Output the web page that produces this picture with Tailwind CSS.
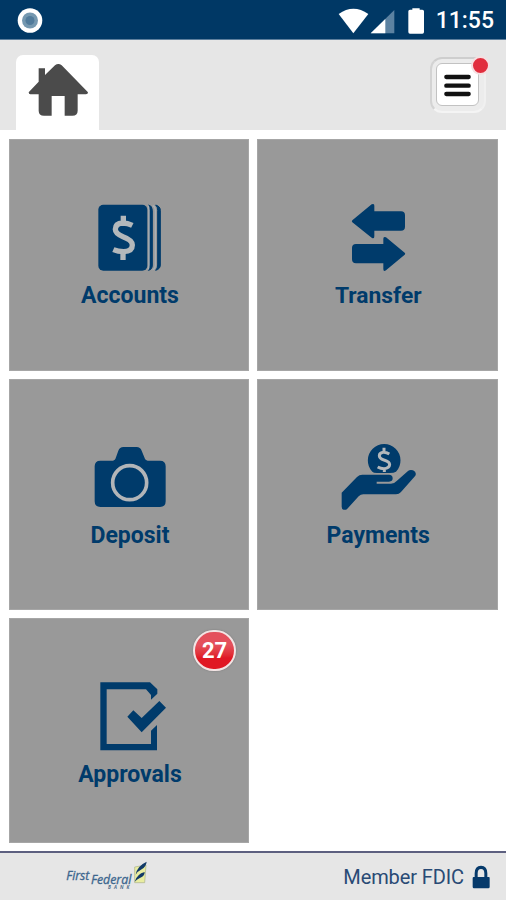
<!DOCTYPE html>
<html lang="en">
<head>
    <meta charset="UTF-8">
    <meta name="viewport" content="width=device-width, initial-scale=1.0">
    <title>First Federal Bank</title>
    <script src="https://cdn.jsdelivr.net/npm/@tailwindcss/browser@4"></script>
</head>
<body class="bg-white font-['Roboto',sans-serif] text-[#003b6b]">

    <div class="flex flex-col w-[506px] h-[900px] overflow-hidden">

        <!-- Status bar -->
        <div class="flex h-10 shrink-0 items-center justify-between bg-[#003865] border-b border-[#5d7f9d] pl-[17px] pr-3 text-white">
            <svg class="size-[26px]" viewBox="0 0 26 26">
                <circle cx="13" cy="13.5" r="12.3" fill="#fff"/>
                <circle cx="13" cy="13.5" r="8" fill="#7598b0"/>
                <circle cx="13" cy="13.5" r="4.5" fill="#517b9b"/>
            </svg>
            <div class="flex items-center">
                <svg class="w-[90px] h-[30px]" viewBox="0 0 270 90">
                    <path d="M5 27Q49 -4 94 27L49 85Z" fill="#fff"/>
                    <path d="M172 15V85H101Z" fill="#5c82a1"/>
                    <path d="M145 42V85H101Z" fill="#fff"/>
                    <path d="M214 19Q214 14 219 14H226V10H248V14H256Q261 14 261 19V81Q261 86 256 86H219Q214 86 214 81Z" fill="#fff"/>
                </svg>
                <span class="ml-[9px] text-[23px] leading-6 font-medium pt-[3px]">11:55</span>
            </div>
        </div>

        <!-- Header -->
        <div class="flex h-[90px] shrink-0 items-start justify-between bg-[#e6e6e6] pl-4 pr-[15px]">
            <div class="mt-[15px] h-[75px] w-[83px] rounded-t-[7px] bg-white">
                <svg class="w-[83px] h-[75px]" viewBox="48 165 249 225">
                    <path d="M86 277L116 245V205H135V225L165 196Q175 188 185 196L264 277Q264 283 258 283H233V332Q233 347 217 347H194V288H155V347H132Q116 347 116 332V283H91Q86 283 86 277Z" fill="#4b4b4b"/>
                </svg>
            </div>
            <div class="relative mt-[17px] mr-[5px] size-14 rounded-xl border-2 border-t-[#cecece] border-l-[#d3d3d3] border-r-[#f0f0f0] border-b-[#f4f4f4] bg-[#ececec] p-1">
                <div class="flex h-[43px] w-[43px] flex-col items-center justify-center gap-1 rounded-md border border-[#c2c2c2] bg-white">
                    <svg class="h-6 w-[27px]" viewBox="0 0 81 72">
                        <path d="M7 12H74M7 38H74M7 63H74" stroke="#111" stroke-width="13" stroke-linecap="round"/>
                    </svg>
                </div>
                <span class="absolute -top-[3px] -right-[6px] size-[19px] rounded-full border-2 border-[#f6dfe1] bg-[#e12d3d]"></span>
            </div>
        </div>

        <!-- Tiles -->
        <div class="grid flex-1 grid-cols-[240px_240.5px] grid-rows-[231.5px_231.5px_225px] gap-2 bg-white pl-[9px] pt-[9px]">

            <div class="flex flex-col items-center border border-[#a6a6a6] bg-[#999] pt-[50px]">
                <svg class="w-[120px] h-[88px]" viewBox="-2 0 360 264">
                    <rect x="86" y="44" width="147" height="198" rx="15" fill="#003b6b"/>
                    <path d="M236 45Q248 47 248 61V225Q248 239 236 241Q240 236 240 225V61Q240 50 236 45Z" fill="#003b6b" stroke="#003b6b" stroke-width="3"/>
                    <path d="M258 45Q272 49 272 61V225Q272 237 258 241Q264 235 264 225V61Q264 50 258 45Z" fill="#003b6b" stroke="#003b6b" stroke-width="3"/>
                    <path d="M249 47Q257 50 257 61V225Q257 236 249 239" fill="none" stroke="#a9b0b6" stroke-width="4"/>
                    <path d="M235 46Q238 50 238 61V225Q238 235 235 239" fill="none" stroke="#a9b0b6" stroke-width="4"/>
                    <path d="M188 106Q174 99 159 99Q137 100 137 118Q137 131 160 140Q188 150 188 165Q188 184 162 185Q145 185 131 179M161 77V99M160 187V210" fill="none" stroke="#b4b8bb" stroke-width="16"/>
                </svg>
                <span class="ml-[2px] mt-1.5 text-[23px] leading-6 font-bold">Accounts</span>
            </div>

            <div class="flex flex-col items-center border border-[#a6a6a6] bg-[#999] pt-[50px]">
                <svg class="ml-[2px] w-[120px] h-[88px]" viewBox="-6 0 360 264">
                    <path d="M97 91L155 43Q163 39 163 47V64H243Q255 64 255 76V110Q255 122 243 122H163V139Q163 148 155 143L97 97Q94 94 97 91Z" fill="#003b6b"/>
                    <path d="M254 188L198 142Q190 138 190 146V162H108Q96 162 96 174V208Q96 220 108 220H190V237Q190 246 198 241L254 194Q257 191 254 188Z" fill="#003b6b"/>
                </svg>
                <span class="ml-[2px] mt-1.5 text-[22.8px] leading-6 font-bold">Transfer</span>
            </div>

            <div class="flex flex-col items-center border border-[#a6a6a6] bg-[#999] pt-[50px]">
                <svg class="w-[120px] h-[88px]" viewBox="-2 0 360 264">
                    <path d="M92 92H130Q136 92 139 82L146 62Q150 51 161 51H201Q212 51 216 62L224 82Q227 92 234 92H271Q288 92 288 109V214Q288 231 271 231H92Q75 231 75 214V109Q75 92 92 92Z" fill="#003b6b"/>
                    <circle cx="180" cy="158" r="51" fill="none" stroke="#b2b5b8" stroke-width="11"/>
                </svg>
                <span class="ml-[2px] mt-1.5 text-[23px] leading-6 font-bold">Deposit</span>
            </div>

            <div class="flex flex-col items-center border border-[#a6a6a6] bg-[#999] pt-[50px]">
                <svg class="ml-[2px] w-[120px] h-[88px]" viewBox="-6 0 360 264">
                    <path d="M157 125A49 49 0 1 1 228 125Q222 129 209 129H171Q160 129 157 125Z" fill="#003b6b"/>
                    <path d="M208 72Q198 66 189 67Q178 69 178 77Q178 85 192 90Q209 95 209 104Q208 115 192 116Q182 116 173 111M192 53V67M193 116V126" fill="none" stroke="#b4b8bb" stroke-width="9"/>
                    <path d="M65 188L111 141Q118 134 127 134H207Q218 134 218 145Q218 155 207 155H170V161H213Q223 161 230 153L264 123Q269 119 279 121Q291 126 286 137L243 186Q237 193 228 193H130Q122 193 116 199L82 236Q77 241 71 239Q65 238 65 230Z" fill="#003b6b"/>
                </svg>
                <span class="ml-[2px] mt-1.5 text-[23px] leading-6 font-bold">Payments</span>
            </div>

            <div class="relative flex flex-col items-center border border-[#a6a6a6] bg-[#999] pt-[50px]">
                <svg class="w-[120px] h-[88px]" viewBox="-2 147 360 264">
                    <path d="M92 187H241L263 208V221L244 239V225L229 208H111V372H244V332L262 315V391H92Z" fill="#003b6b"/>
                    <path d="M173 290L191 271L216 294L269 243L289 263L216 337Z" fill="#003b6b"/>
                </svg>
                <span class="ml-[2px] mt-1.5 text-[23px] leading-6 font-bold">Approvals</span>
                <span class="absolute top-[11px] right-[12px] flex h-[41px] w-[43px] items-center justify-center rounded-full border-2 border-[#f3e4e4] bg-linear-to-b from-[#e4505c] from-35% to-[#e01824] to-70% text-[22px] font-bold text-white shadow-[0_0_2px_#777]">27</span>
            </div>
        </div>

        <!-- Footer -->
        <div class="flex h-[49px] shrink-0 items-center justify-between border-t-2 border-[#5d6080] bg-[#e6e6e6] pl-[65px] pr-4">
            <svg class="w-[84px] h-[34px]" viewBox="195 77 252 102" font-family="Open Sans, sans-serif" font-style="italic">
                <text x="199" y="137" font-size="38" textLength="69" lengthAdjust="spacingAndGlyphs" fill="#3d668e" stroke="#3d668e">First</text>
                <text x="273" y="148" font-size="38" textLength="121" lengthAdjust="spacingAndGlyphs" fill="#3d668e" stroke="#3d668e">Federal</text>
                <text x="324" y="165" font-size="14" font-weight="bold" textLength="64" fill="#4f6d8c">BANK</text>
                <path d="M404 98L438 92L434 145H404Z" fill="#e9eda0" stroke="#a9b08b" stroke-width="2"/>
                <path d="M407 121Q411 95 440 82Q438 98 425 105Q413 111 407 121Z" fill="#123a68"/>
                <path d="M404 142Q411 119 434 113Q434 126 421 130Q411 134 404 142Z" fill="#123a68"/>
            </svg>
            <div class="flex items-center gap-2">
                <span class="text-[20px] leading-6 tracking-[-0.1px] text-[#294a75]">Member FDIC</span>
                <svg class="w-[18px] h-6" viewBox="0 0 54 72">
                    <path d="M8 36V25Q8 2 27 2Q46 2 46 25V36H51Q53 36 53 40V65Q53 70 49 70H6Q2 70 2 65V40Q2 36 5 36ZM17 36H37V25Q37 12 27 12Q17 12 17 25Z" fill="#063a6b" fill-rule="evenodd"/>
                </svg>
            </div>
        </div>
    </div>

</body>
</html>
